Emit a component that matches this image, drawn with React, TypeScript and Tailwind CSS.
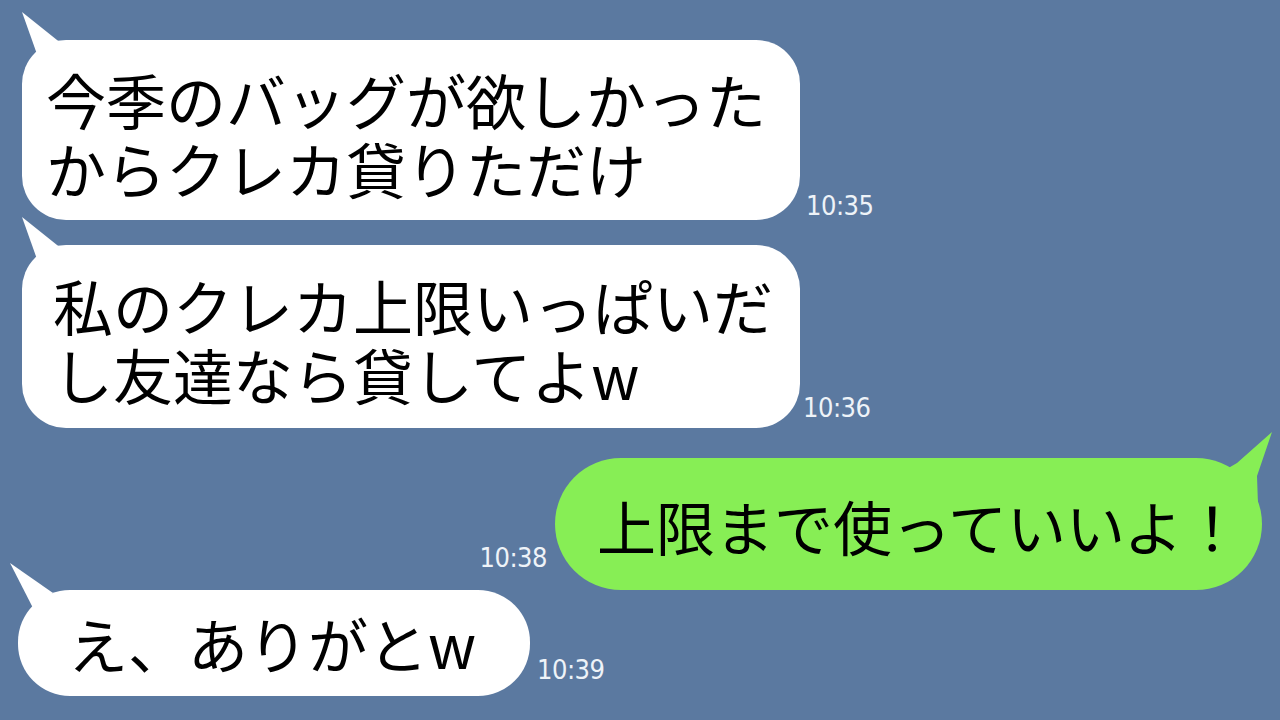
import React from "react";

const jp = { fontFamily: '"Noto Sans CJK JP", "Noto Sans", sans-serif' };
const ts = { fontFamily: '"DejaVu Sans Condensed", "Noto Sans", sans-serif' };

function LeftTail({ className }: { className: string }) {
  return (
    <svg className={className} width="50" height="50" viewBox="0 0 50 50">
      <polygon points="0,0 40,32 16,45" fill="#ffffff" />
    </svg>
  );
}

function Stamp({ text }: { text: string }) {
  return (
    <span className="text-[27px] leading-none text-[#eef3f8] tracking-[-0.5px]" style={ts}>
      {text}
    </span>
  );
}

export default function App() {
  return (
    <div className="w-[1280px] h-[720px] overflow-hidden bg-[#5b79a0] flex flex-col pt-[40px]" style={jp}>
      {/* 1 */}
      <div className="flex items-end gap-[6px] pl-[22px]">
        <div className="relative w-[778px] h-[180px] rounded-[44px] bg-white flex flex-col justify-center pl-[24px] pt-[6px]">
          <LeftTail className="absolute left-[0px] top-[-28px]" />
          <p className="relative text-[60px] leading-[69px] text-black whitespace-nowrap">
            今季のバッグが欲しかった
            <br />
            からクレカ貸りただけ
          </p>
        </div>
        <div><Stamp text="10:35" /></div>
      </div>

      {/* 2 */}
      <div className="flex items-end gap-[3px] pl-[22px] mt-[25px]">
        <div className="relative w-[778px] h-[183px] rounded-[44px] bg-white flex flex-col justify-center pl-[31px] pt-[4px]">
          <LeftTail className="absolute left-[0px] top-[-28px]" />
          <p className="relative text-[60px] leading-[69px] text-black whitespace-nowrap">
            私のクレカ上限いっぱいだ
            <br />
            し友達なら貸してよw
          </p>
        </div>
        <div className="pb-[6px]"><Stamp text="10:36" /></div>
      </div>

      {/* 3 */}
      <div className="flex items-end justify-end gap-[8px] pr-[18px] mt-[30px]">
        <div className="pb-[18px]"><Stamp text="10:38" /></div>
        <div className="relative w-[707px] h-[132px] rounded-[66px] bg-[#87ee55] flex items-center pl-[42px] pt-[2px]">
          <svg className="absolute right-[-10px] top-[-26px]" width="50" height="80" viewBox="0 0 50 80">
            <polygon points="50,0 15,31 3,38 36,73 35,44" fill="#87ee55" />
          </svg>
          <p className="relative text-[59px] leading-none text-black whitespace-nowrap">上限まで使っていいよ！</p>
        </div>
      </div>

      {/* 4 */}
      <div className="flex items-end gap-[7px] pl-[18px]">
        <div className="relative w-[512px] h-[106px] rounded-[52px] bg-white flex items-center pl-[50px]">
          <svg className="absolute left-[-8px] top-[-27px]" width="50" height="50" viewBox="0 0 50 50">
            <polygon points="0,0 43,30 23,45" fill="#ffffff" />
          </svg>
          <p className="relative text-[60px] leading-none text-black whitespace-nowrap">え、ありがとw</p>
        </div>
        <div className="pb-[12px]"><Stamp text="10:39" /></div>
      </div>
    </div>
  );
}
